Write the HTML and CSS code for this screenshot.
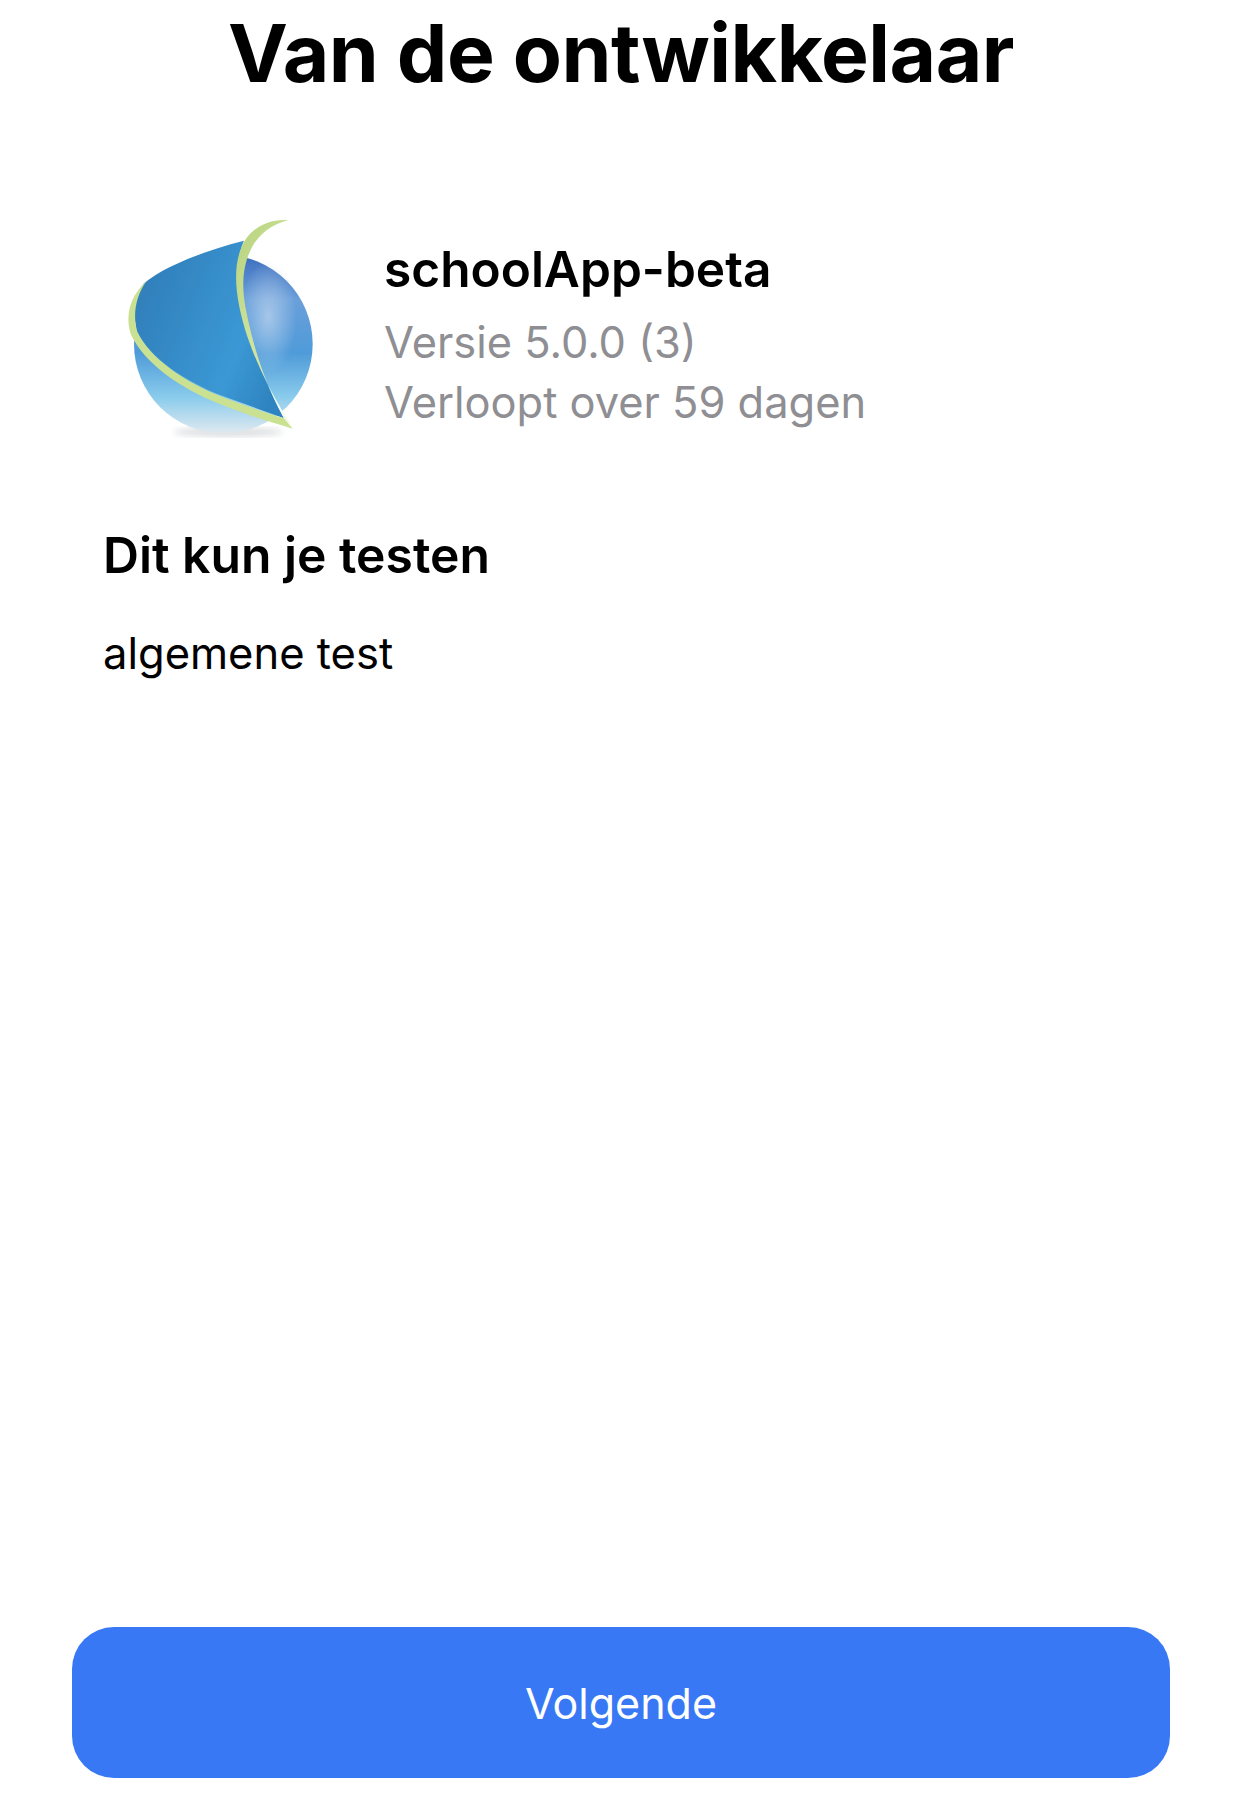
FILE: index.html
```html
<!DOCTYPE html>
<html lang="nl">
<head>
    <meta charset="UTF-8">
    <meta name="viewport" content="width=device-width, initial-scale=1.0">
    <title>Van de ontwikkelaar</title>
    <link rel="stylesheet" href="styles.css">
</head>
<body>
    <div class="screen">
        <h1 class="title">Van de ontwikkelaar</h1>

        <!-- App info -->
        <div class="app">
            <svg class="app-icon" viewBox="0 0 720 780" aria-hidden="true">
                <defs>
                    <linearGradient id="ball" x1="0" y1="0" x2="0" y2="1">
                        <stop offset="0" stop-color="#3c6dbd"/>
                        <stop offset="0.25" stop-color="#6a9fda"/>
                        <stop offset="0.55" stop-color="#4f9bd9"/>
                        <stop offset="0.8" stop-color="#8accec"/>
                        <stop offset="1" stop-color="#e0e9f0"/>
                    </linearGradient>
                    <radialGradient id="shine" cx="0.5" cy="0.5" r="0.5">
                        <stop offset="0" stop-color="#bcd4ee" stop-opacity="0.75"/>
                        <stop offset="1" stop-color="#bcd4ee" stop-opacity="0"/>
                    </radialGradient>
                    <linearGradient id="leaf" x1="0" y1="0.2" x2="1" y2="0.7">
                        <stop offset="0" stop-color="#2f7db9"/>
                        <stop offset="0.72" stop-color="#3b98d4"/>
                        <stop offset="1" stop-color="#2e84c0"/>
                    </linearGradient>
                    <linearGradient id="rim" x1="0.3" y1="0" x2="0.8" y2="1">
                        <stop offset="0" stop-color="#bcd684"/>
                        <stop offset="0.6" stop-color="#d3e6a2"/>
                        <stop offset="0.9" stop-color="#ffffff"/>
                        <stop offset="1" stop-color="#f4f8e0"/>
                    </linearGradient>
                    <filter id="soft"><feGaussianBlur stdDeviation="9"/></filter>
                    <filter id="edge"><feGaussianBlur stdDeviation="1.5"/></filter>
                </defs>
                <ellipse cx="385" cy="696" rx="165" ry="14" fill="#dcdee0" filter="url(#soft)"/>
                <g filter="url(#edge)">
                    <circle cx="370" cy="432" r="268" fill="url(#ball)"/>
                    <ellipse cx="505" cy="350" rx="85" ry="170" fill="url(#shine)"/>
                    <path d="M432 122 C320 150 190 200 132 250 C100 295 98 350 112 395 C150 475 260 545 360 585 L552 655 C490 540 435 390 416 270 C408 210 415 160 432 122 Z" fill="url(#leaf)"/>
                    <path d="M140 243 C92 285 74 345 92 402 C135 495 250 568 350 608 C420 636 500 664 578 686 L552 655 C470 630 400 605 340 580 C250 540 150 475 112 395 C98 350 105 290 140 243 Z" fill="#cbe192"/>
                    <path d="M565 60 C497 56 447 90 425 140 C404 190 404 250 418 320 C442 440 505 570 578 682 L552 655 C490 540 460 440 436 320 C424 250 430 195 452 150 C472 105 512 75 565 60 Z" fill="url(#rim)"/>
                </g>
            </svg>
            <div class="app-info">
                <div class="app-name">schoolApp-beta</div>
                <div class="app-meta">Versie 5.0.0 (3)</div>
                <div class="app-meta">Verloopt over 59 dagen</div>
            </div>
        </div>

        <h2 class="section-title">Dit kun je testen</h2>
        <p class="section-text">algemene test</p>

        <button class="next" type="button">Volgende</button>
    </div>
</body>
</html>
```

FILE: styles.css
```css
html, body {
    margin: 0;
    padding: 0;
    background: #fff;
}

.screen {
    height: 1802px;
    box-sizing: border-box;
    padding: 0 72px 24px;
    display: flex;
    flex-direction: column;
    font-family: Inter, "Liberation Sans", sans-serif;
    color: #000;
    overflow: hidden;
}

.title {
    margin: 7px 0 0;
    font-size: 80.3px;
    line-height: 92px;
    font-weight: 700;
    text-align: center;
    letter-spacing: -0.5px;
}

.app {
    display: flex;
    margin: 101px 0 0 28px;
}

.app-icon {
    width: 240px;
    height: 260px;
    flex-shrink: 0;
}

.app-info {
    margin: 40px 0 0 44px;
}

.app-name {
    margin-bottom: 14px;
    font-size: 49.6px;
    line-height: 58px;
    font-weight: 600;
}

.app-meta {
    font-size: 43.4px;
    line-height: 60px;
    color: #8e8e93;
}

.section-title {
    margin: 66px 0 0 31px;
    font-size: 49.8px;
    line-height: 58px;
    font-weight: 600;
}

.section-text {
    margin: 43px 0 0 31px;
    font-size: 43.5px;
    line-height: 52px;
}

.next {
    margin-top: auto;
    height: 151px;
    border: none;
    border-radius: 42px;
    background: #3878f4;
    color: #fff;
    font-family: inherit;
    font-size: 43px;
}
```
